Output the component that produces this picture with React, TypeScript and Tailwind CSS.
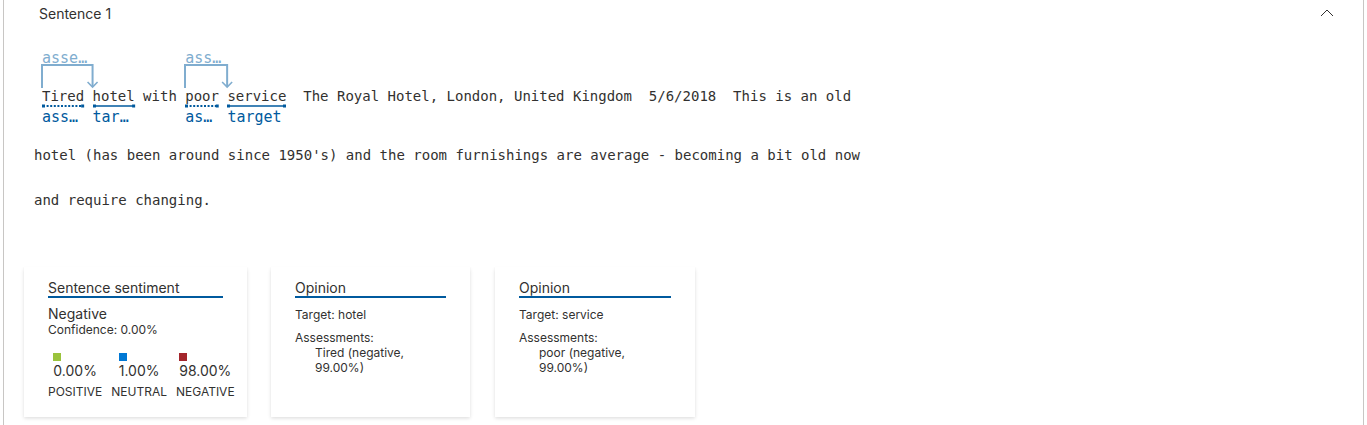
import React from "react";

const MONO = { fontFamily: '"DejaVu Sans Mono", "Liberation Mono", monospace' };
const SANS = { fontFamily: 'Inter, "Noto Sans", "Liberation Sans", sans-serif' };

function Underline({ dotted, w }: { dotted?: boolean; w: number }) {
  return (
    <svg width={w} height={4} className="block overflow-visible">
      <line
        x1={1}
        y1={2}
        x2={w - 1}
        y2={2}
        stroke="#005a9e"
        strokeWidth={dotted ? 2 : 1.6}
        strokeDasharray={dotted ? "2 1.6" : undefined}
      />
      <rect x={0} y={0.5} width={3} height={3} fill="#005a9e" />
      <rect x={w - 3} y={0.5} width={3} height={3} fill="#005a9e" />
    </svg>
  );
}

function Bracket({ w, label }: { w: number; label: string }) {
  return (
    <div className="absolute left-0 top-0 h-[39px]" style={{ width: w }}>
      <div
        className="overflow-hidden text-ellipsis whitespace-nowrap text-[15px] leading-[18px] text-[#80adcf]"
        style={{ ...MONO, width: w }}
      >
        {label}
      </div>
      <svg
        width={w + 8}
        height={24}
        className="absolute left-[-1px] top-[15px] overflow-visible"
      >
        <path d={`M1 24 V1 H${w + 1} V23`} fill="none" stroke="#80adcf" strokeWidth={2} />
        <path
          d={`M${w - 4} 18 L${w + 1} 23 L${w + 6} 18`}
          fill="none"
          stroke="#80adcf"
          strokeWidth={1.6}
        />
      </svg>
    </div>
  );
}

const CW = 14 * 0.602;

function Token({
  word,
  label,
  dotted,
  bracket,
}: {
  word: string;
  label: string;
  dotted?: boolean;
  bracket?: { chars: number; label: string };
}) {
  const w = word.length * CW;
  return (
    <div className="flex flex-col" style={{ width: w }}>
      <div className="relative h-[39px]">
        {bracket && <Bracket w={bracket.chars * CW} label={bracket.label} />}
      </div>
      <div className="text-[14px] leading-[16px] whitespace-pre text-[#323130]">{word}</div>
      <Underline w={w} dotted={dotted} />
      <div
        className="overflow-hidden text-ellipsis whitespace-nowrap text-[15px] leading-[18px] text-[#005a9e]"
        style={{ width: w }}
      >
        {label}
      </div>
    </div>
  );
}

function Plain({ text }: { text: string }) {
  return (
    <div className="mt-[39px] text-[14px] leading-[16px] whitespace-pre text-[#323130]">{text}</div>
  );
}

function Title({ children }: { children: React.ReactNode }) {
  return (
    <div className="h-[19px] border-b-2 border-[#005a9e] text-[14px] leading-[17px] text-[#323130]">
      {children}
    </div>
  );
}

function Score({ color, pct, label }: { color: string; pct: string; label: string }) {
  return (
    <div className="flex flex-col items-center">
      <div className="flex flex-col items-start">
        <div className={`mt-[15px] h-[8px] w-[8px] ${color}`} />
        <div className="mt-[1px] text-[14px] leading-[18px] text-[#323130]">{pct}</div>
      </div>
      <div className="mt-[4px] whitespace-nowrap text-[12px] leading-[16px] text-[#323130]">
        {label}
      </div>
    </div>
  );
}

const CARD =
  "h-[150px] bg-white px-6 pt-[12px] shadow-[0_1.6px_3.6px_rgba(0,0,0,0.132),0_0.3px_0.9px_rgba(0,0,0,0.108)]";

function Opinion({ target, word, width }: { target: string; word: string; width: string }) {
  return (
    <div className={`${CARD} ${width}`}>
      <Title>Opinion</Title>
      <div className="mt-[9px] text-[12px] leading-[16px] text-[#323130]">Target: {target}</div>
      <div className="mt-[7px] text-[12px] leading-[15px] text-[#323130]">
        <div>Assessments:</div>
        <div className="pl-5">{word} (negative,</div>
        <div className="pl-5">99.00%)</div>
      </div>
    </div>
  );
}

export default function App() {
  return (
    <div className="min-h-[425px] bg-white" style={SANS}>
      <div className="mx-[3px] min-h-[425px] border-x border-[#c8c6c4]">
        <div className="flex h-[28px] items-start justify-between pl-[35px] pr-[29px]">
          <div className="mt-[4px] text-[14px] leading-[20px] text-[#323130]">Sentence 1</div>
          <svg width={14} height={8} className="mt-[9px]">
            <path d="M1 7 L7 1 L13 7" fill="none" stroke="#323130" strokeWidth={1} />
          </svg>
        </div>

        <div className="pl-[30px]" style={MONO}>
          <div className="ml-2 mt-[21px] flex items-start">
            <Token word="Tired" label="assessment" dotted bracket={{ chars: 6, label: "assessment" }} />
            <Plain text=" " />
            <Token word="hotel" label="target" />
            <Plain text=" with " />
            <Token word="poor" label="assessment" dotted bracket={{ chars: 5, label: "assessment" }} />
            <Plain text=" " />
            <Token word="service" label="target" />
            <Plain text="  The Royal Hotel, London, United Kingdom  5/6/2018  This is an old" />
          </div>
          <div className="mt-[21px] text-[14px] leading-[16px] whitespace-pre text-[#323130]">
            hotel (has been around since 1950's) and the room furnishings are average - becoming a bit old now
          </div>
          <div className="mt-[29px] text-[14px] leading-[16px] whitespace-pre text-[#323130]">
            and require changing.
          </div>
        </div>

        <div className="mt-[59px] flex pl-5">
          <div className={`${CARD} w-[223px]`}>
            <Title>Sentence sentiment</Title>
            <div className="mt-[8px] text-[14px] leading-[16px] text-[#323130]">Negative</div>
            <div className="text-[12px] leading-[16px] text-[#323130]">Confidence: 0.00%</div>
            <div className="flex gap-[9px]">
              <Score color="bg-[#9ac33c]" pct="0.00%" label="POSITIVE" />
              <Score color="bg-[#0078d4]" pct="1.00%" label="NEUTRAL" />
              <Score color="bg-[#a4262c]" pct="98.00%" label="NEGATIVE" />
            </div>
          </div>
          <div className="ml-6">
            <Opinion target="hotel" word="Tired" width="w-[199px]" />
          </div>
          <div className="ml-[25px]">
            <Opinion target="service" word="poor" width="w-[200px]" />
          </div>
        </div>
      </div>
    </div>
  );
}
